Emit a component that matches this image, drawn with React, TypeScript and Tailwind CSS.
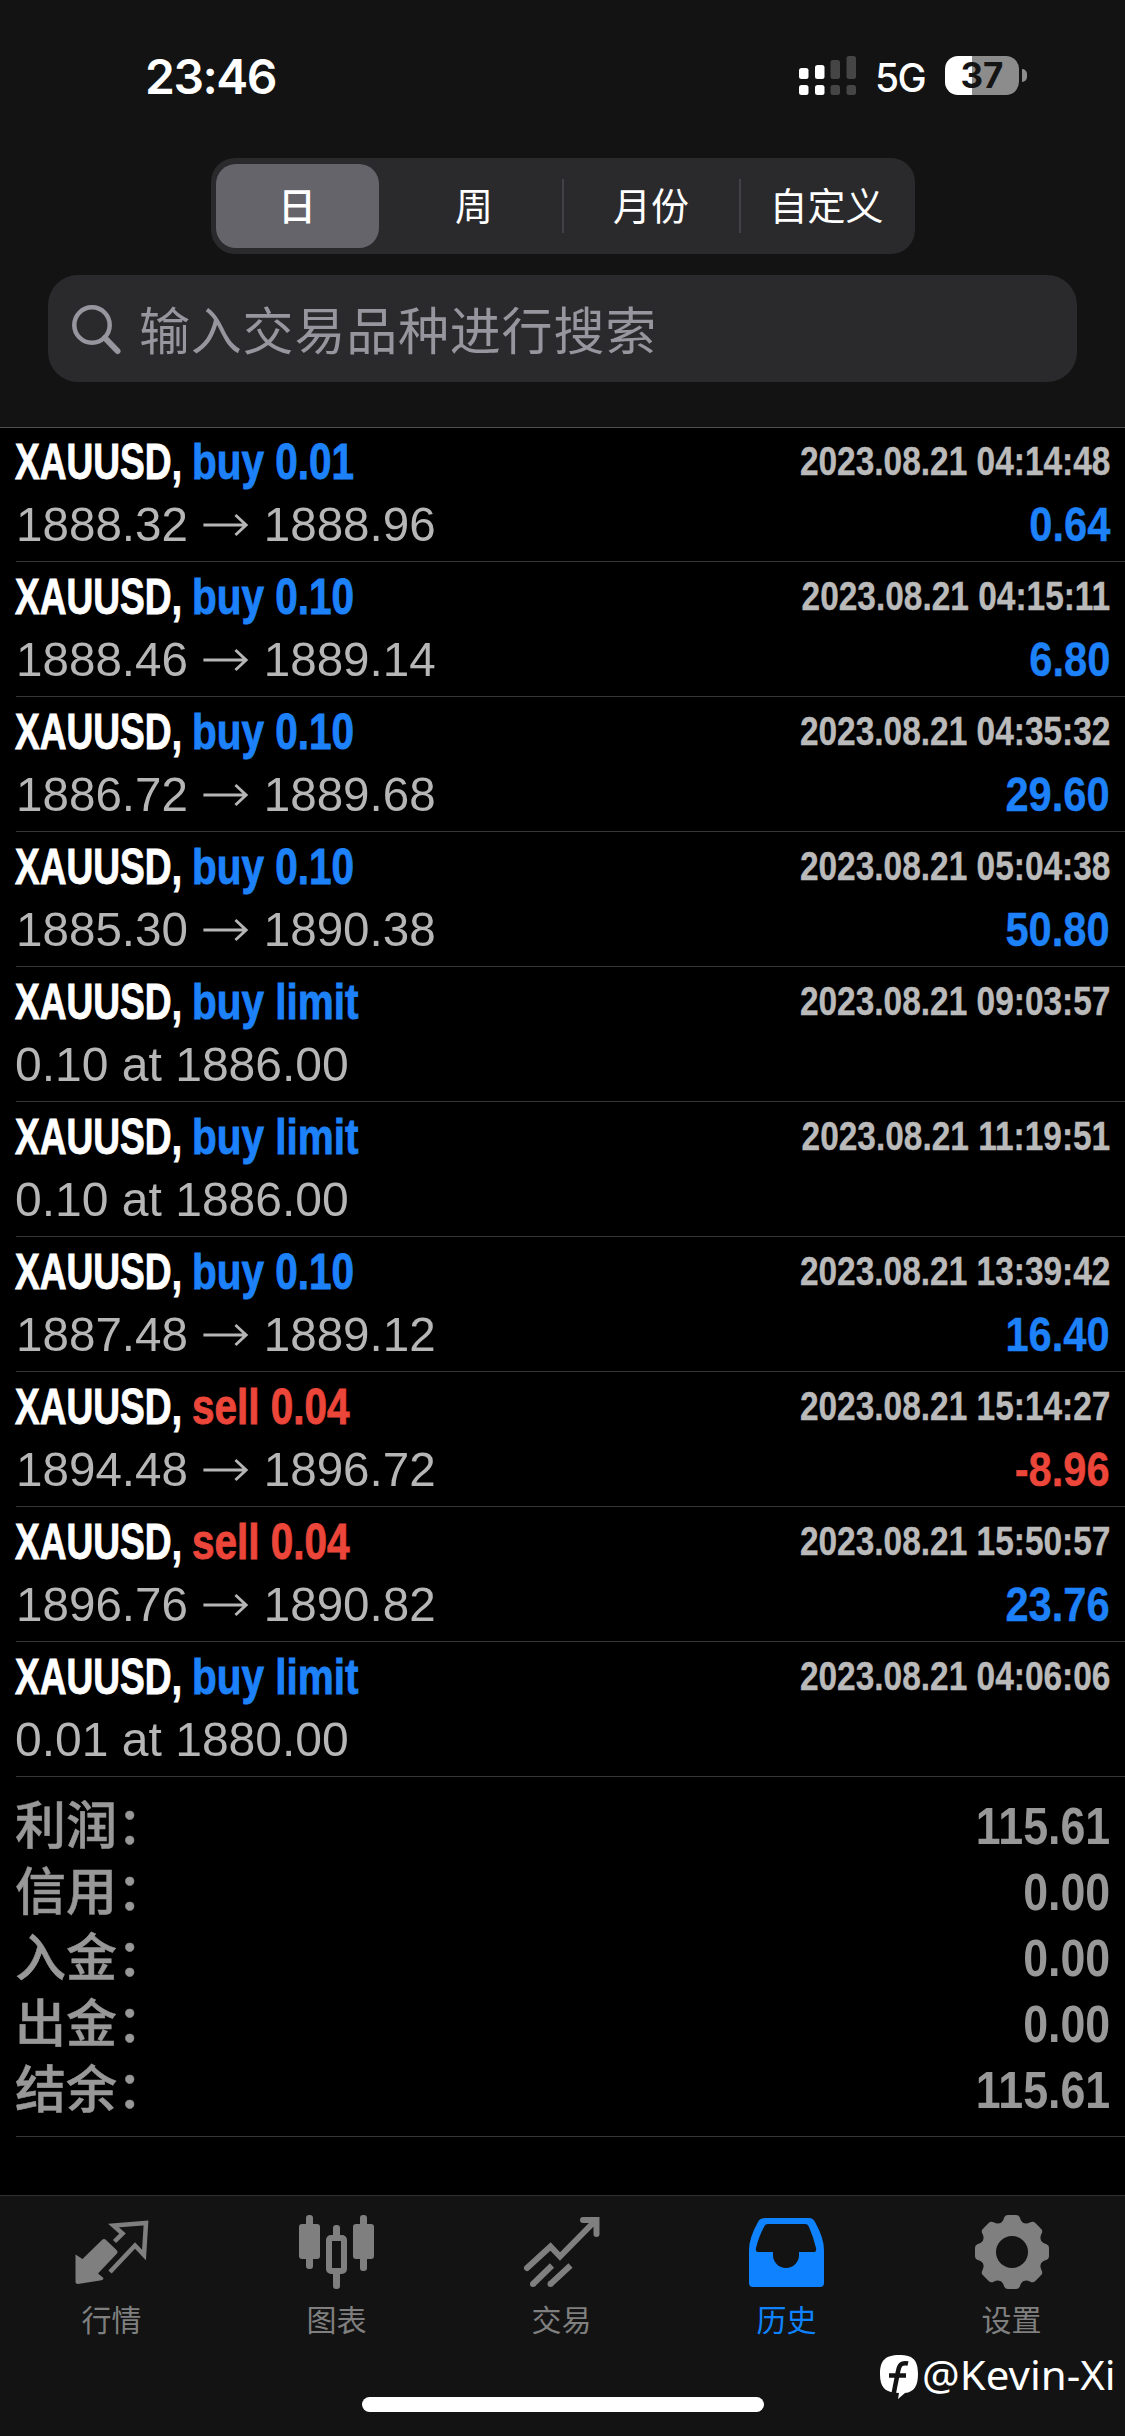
import React from "react";

type Trade = { side: "buy" | "sell"; label: string; detail: string[]; time: string; profit?: string };

const trades: Trade[] = [
  { side: "buy", label: "0.01", detail: ["1888.32", "1888.96"], time: "2023.08.21 04:14:48", profit: "0.64" },
  { side: "buy", label: "0.10", detail: ["1888.46", "1889.14"], time: "2023.08.21 04:15:11", profit: "6.80" },
  { side: "buy", label: "0.10", detail: ["1886.72", "1889.68"], time: "2023.08.21 04:35:32", profit: "29.60" },
  { side: "buy", label: "0.10", detail: ["1885.30", "1890.38"], time: "2023.08.21 05:04:38", profit: "50.80" },
  { side: "buy", label: "limit", detail: ["0.10 at 1886.00"], time: "2023.08.21 09:03:57" },
  { side: "buy", label: "limit", detail: ["0.10 at 1886.00"], time: "2023.08.21 11:19:51" },
  { side: "buy", label: "0.10", detail: ["1887.48", "1889.12"], time: "2023.08.21 13:39:42", profit: "16.40" },
  { side: "sell", label: "0.04", detail: ["1894.48", "1896.72"], time: "2023.08.21 15:14:27", profit: "-8.96" },
  { side: "sell", label: "0.04", detail: ["1896.76", "1890.82"], time: "2023.08.21 15:50:57", profit: "23.76" },
  { side: "buy", label: "limit", detail: ["0.01 at 1880.00"], time: "2023.08.21 04:06:06" },
];

const summary = [
  ["利润：", "115.61"],
  ["信用：", "0.00"],
  ["入金：", "0.00"],
  ["出金：", "0.00"],
  ["结余：", "115.61"],
];

const BLUE = "text-[#1d82fa]";
const RED = "text-[#eb4639]";

function StatusBar() {
  return (
    <div className="flex h-[158px] items-start justify-between pr-[98px] pl-[145px]">
      <div className="mt-[53px] font-['Inter'] text-[48px] leading-[48px] font-semibold tracking-[-1.5px] text-white">23:46</div>
      <div className="mt-[56px] flex items-start">
        <svg width="58" height="39" viewBox="0 0 58 39">
          <g fill="#fff">
            <rect x="0" y="12" width="9.5" height="11" rx="2.5" />
            <rect x="16" y="9" width="9.5" height="14" rx="2.5" />
            <rect x="0" y="29" width="9.5" height="10" rx="2.5" />
            <rect x="16" y="29" width="9.5" height="10" rx="2.5" />
          </g>
          <g fill="#454545">
            <rect x="31.5" y="4" width="9.5" height="19" rx="2.5" />
            <rect x="47.5" y="0" width="9.5" height="23" rx="2.5" />
            <rect x="31.5" y="29" width="9.5" height="10" rx="2.5" />
            <rect x="47.5" y="29" width="9.5" height="10" rx="2.5" />
          </g>
        </svg>
        <div className="mt-[2px] ml-[18px] w-[51px] font-['Inter'] text-[39px] leading-[40px] font-medium tracking-[-1.5px] text-white">5G</div>
        <div className="ml-[19px] flex h-[39px] w-[74px] items-center justify-center rounded-[13px] bg-[linear-gradient(90deg,#fff_37%,#8c8c8c_37%)] font-['Inter'] text-[35px] font-bold text-[#141414]">
          37
        </div>
        <div className="mt-[13px] ml-[3px] h-[13px] w-[5px] rounded-r-full bg-[#8c8c8c]" />
      </div>
    </div>
  );
}

function Header() {
  return (
    <header className="flex h-[428px] flex-col border-b border-[#505052] bg-[#131313]">
      <StatusBar />
      <div className="mx-auto flex h-[96px] w-[704px] items-center rounded-[24px] bg-[#2a2a2d] font-['Noto_Sans_CJK_SC'] text-[38px] leading-none text-white">
        <div className="ml-[5px] flex h-[84px] w-[163px] items-center justify-center rounded-[20px] bg-[#65646b] pb-[4px] font-medium">日</div>
        <div className="flex h-[54px] flex-1 items-center justify-center pb-[4px] pl-[8px]">周</div>
        <div className="flex h-[54px] w-[177px] items-center justify-center border-l-2 border-[#424246] pb-[4px]">月份</div>
        <div className="flex h-[54px] w-[176px] items-center justify-center border-l-2 border-[#424246] pr-[2px] pb-[4px]">自定义</div>
      </div>
      <div className="mx-[48px] mt-[21px] flex h-[107px] items-center rounded-[30px] bg-[#2a2a2d] text-[#97969e]">
        <svg className="ml-[22px]" width="54" height="54" viewBox="0 0 54 54" fill="none" stroke="currentColor" strokeWidth="4.5">
          <circle cx="22" cy="23" r="17.7" />
          <path d="M35 36l12.500 13" strokeWidth="6" strokeLinecap="round" />
        </svg>
        <div className="ml-[15px] font-['Noto_Sans_CJK_SC'] text-[51px] leading-none tracking-[0.8px]">输入交易品种进行搜索</div>
      </div>
    </header>
  );
}

function TradeRow({ trade }: { trade: Trade }) {
  const color = trade.side === "buy" ? BLUE : RED;
  const profitColor = trade.profit?.startsWith("-") ? RED : BLUE;
  return (
    <li className="ml-[16px] h-[135px] border-b border-[#363636] pt-[3px] pr-[15px] font-['Liberation_Sans']">
      <div className="flex h-[63px] items-center justify-between font-bold whitespace-nowrap">
        <div className="-ml-px flex items-center text-[50px] leading-[50px] [-webkit-text-stroke:0.9px_currentColor]">
          <div className="w-[177px] text-white">
            <span className="inline-block origin-left scale-x-[0.742]">XAUUSD,</span>
          </div>
          <div className={color}>
            <span className="inline-block origin-left scale-x-[0.81]">
              {trade.side} {trade.label}
            </span>
          </div>
        </div>
        <div className="-mt-[2px] origin-right scale-x-[0.836] text-[40px] leading-[40px] text-[#bababa] [-webkit-text-stroke:0.4px_currentColor]">
          {trade.time}
        </div>
      </div>
      <div className="flex h-[63px] items-center justify-between whitespace-nowrap">
        {trade.detail[1] ? (
          <div className="flex origin-left scale-x-[0.971] items-center text-[49px] leading-[49px] text-[#b6b6b6]">
            <span>{trade.detail[0]}</span>
            <svg className="mx-[15px]" width="48" height="24" viewBox="0 0 48 24" fill="none" stroke="currentColor" strokeWidth="3">
              <path d="M1 12h43M34 2l11 10-11 10" />
            </svg>
            <span>{trade.detail[1]}</span>
          </div>
        ) : (
          <div className="-ml-px origin-left scale-x-[0.98] text-[49px] leading-[49px] text-[#b6b6b6]">{trade.detail[0]}</div>
        )}
        {trade.profit && (
          <div className={`origin-right scale-x-[0.85] text-[49px] leading-[49px] font-bold [-webkit-text-stroke:0.4px_currentColor] ${profitColor}`}>
            {trade.profit}
          </div>
        )}
      </div>
    </li>
  );
}

function Summary() {
  return (
    <dl className="ml-[16px] h-[360px] border-b border-[#363636] pt-[16px] pr-[15px] text-[#989898]">
      {summary.map(([name, value]) => (
        <div key={name} className="flex h-[66px] items-center justify-between">
          <dt className="-ml-px font-['Liberation_Sans','Noto_Sans_CJK_SC',sans-serif] text-[51px] leading-none font-medium [-webkit-text-stroke:0.5px_currentColor]">
            {name}
          </dt>
          <dd className="origin-right scale-x-[0.86] font-['Liberation_Sans'] text-[52px] leading-none font-bold">{value}</dd>
        </div>
      ))}
    </dl>
  );
}

function QuotesIcon() {
  return (
    <svg width="110" height="90" viewBox="0 0 110 90" fill="currentColor">
      <path d="M18.500 49.500l7 4.500 19.500-19q2-2 4 0l10.500 10q2 2 0 4L41 68.500l5.500 4.500q0 2-2 2.300L21 79q-2.500 0-2.500-2.500z" />
      <path d="M57.500 36.500l8-8-9-8 32.500-2.500-2 32-9-9.500L53 67" fill="none" stroke="currentColor" strokeWidth="4.500" />
    </svg>
  );
}

function ChartIcon() {
  return (
    <svg width="110" height="90" viewBox="0 0 110 90" fill="currentColor">
      <rect x="17" y="19" width="21" height="35" rx="3" />
      <rect x="24" y="10" width="7" height="54" rx="3" />
      <rect x="71" y="19" width="21" height="35" rx="3" />
      <rect x="78" y="10" width="7" height="56" rx="3" />
      <rect x="51" y="20" width="7" height="14" rx="3" />
      <rect x="51" y="66" width="7" height="18" rx="3" />
      <rect x="47" y="33" width="15" height="33" rx="2" fill="none" stroke="currentColor" strokeWidth="6" />
    </svg>
  );
}

function TradeIcon() {
  return (
    <svg width="110" height="90" viewBox="0 0 110 90" fill="none" stroke="currentColor" strokeWidth="6">
      <path d="M20 63L43.500 41.500l9.500 10L87 17M76 15h13.500v14" strokeLinecap="round" />
      <path d="M26 79L45 60.500M43.500 79L63.500 60.500" />
      <circle cx="26" cy="79" r="3" fill="currentColor" stroke="none" />
      <circle cx="43.500" cy="79" r="3" fill="currentColor" stroke="none" />
    </svg>
  );
}

function HistoryIcon() {
  return (
    <svg width="110" height="90" viewBox="0 0 110 90" fill="currentColor">
      <path
        fillRule="evenodd"
        d="M33 13h44q4 0 6 4 9 16 9 28v33q0 4-4 4H21q-4 0-4-4V45q0-12 9-28 2-4 7-4zM36 19q-3 0-4 3-5 9-8 21-1 4 3 4h14v3a13 13 0 0 0 26 0v-3h14q4 0 3-4-3-12-7-21-1-3-4-3z"
      />
    </svg>
  );
}

function SettingsIcon() {
  return (
    <svg width="110" height="90" viewBox="0 0 110 90">
      <g fill="currentColor">
        <circle cx="55" cy="47" r="31" />
        {[0, 45, 90, 135, 180, 225, 270, 315].map((a) => (
          <path key={a} transform={`rotate(${a} 55 47)`} d="M42 19q4-2 5-6 1-3 4-3h8q3 0 4 3 1 4 5 6z" />
        ))}
      </g>
      <circle cx="55" cy="47" r="16" fill="#131313" />
    </svg>
  );
}

const tabs = [
  { name: "行情", Icon: QuotesIcon, active: false },
  { name: "图表", Icon: ChartIcon, active: false },
  { name: "交易", Icon: TradeIcon, active: false },
  { name: "历史", Icon: HistoryIcon, active: true },
  { name: "设置", Icon: SettingsIcon, active: false },
];

export default function App() {
  return (
    <div className="flex h-[2436px] w-[1125px] flex-col overflow-hidden bg-black">
      <Header />
      <ul className="-mt-px">
        {trades.map((t) => (
          <TradeRow key={t.time} trade={t} />
        ))}
      </ul>
      <Summary />
      <footer className="relative mt-auto flex h-[241px] flex-col border-t border-[#303030] bg-[#131313]">
        <nav className="mr-px -ml-px grid grid-cols-5">
          {tabs.map(({ name, Icon, active }) => (
            <div key={name} className={`flex flex-col items-center pt-[9px] ${active ? "text-[#0f83ff]" : "text-[#7f7f7f]"}`}>
              <Icon />
              <div className="mt-[6px] font-['Noto_Sans_CJK_SC'] text-[30px] leading-[34px]">{name}</div>
            </div>
          ))}
        </nav>
        <div className="absolute top-[201px] left-[362px] h-[15px] w-[402px] rounded-full bg-white" />
        <div className="absolute top-[159px] left-[880px] flex items-start text-white">
          <svg width="40" height="46" viewBox="0 0 40 46">
            <path fill="#fff" d="M19 0c14 0 19 5 19 19 0 12-4 18-13 19l-7 6 1-6-6-.5C5 36 0 32 0 19S5 0 19 0z" />
            <path d="M28 8.500c-7-1.500-9 2-10 8L13 42M9 20.500h17" fill="none" stroke="#131313" strokeWidth="4.500" />
          </svg>
          <div className="-mt-[2px] ml-[2px] origin-left scale-x-[1.05] font-['Noto_Sans'] text-[40px] leading-[44px] whitespace-nowrap">@Kevin-Xi</div>
        </div>
      </footer>
    </div>
  );
}
